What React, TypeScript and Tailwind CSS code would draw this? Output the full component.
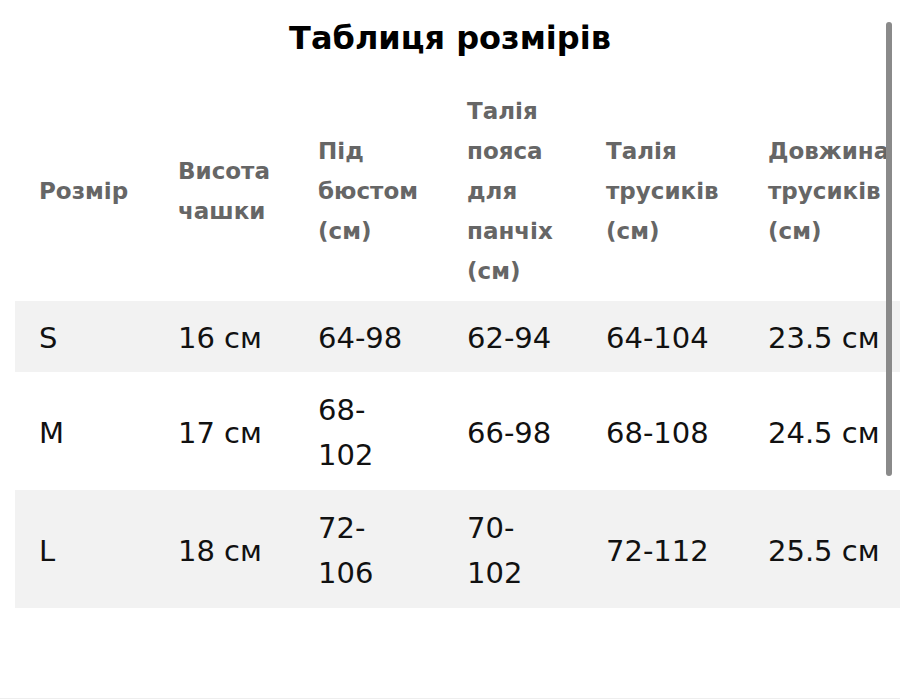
import React from "react";

type Row = { size: string; cup: string; bust: string[]; belt: string[]; waist: string; length: string };

const headers: string[][] = [
  ["Розмір"],
  ["Висота", "чашки"],
  ["Під", "бюстом", "(см)"],
  ["Талія", "пояса", "для", "панчіх", "(см)"],
  ["Талія", "трусиків", "(см)"],
  ["Довжина", "трусиків", "(см)"],
];

const rows: Row[] = [
  { size: "S", cup: "16 см", bust: ["64-98"], belt: ["62-94"], waist: "64-104", length: "23.5 см" },
  { size: "M", cup: "17 см", bust: ["68-", "102"], belt: ["66-98"], waist: "68-108", length: "24.5 см" },
  { size: "L", cup: "18 см", bust: ["72-", "106"], belt: ["70-", "102"], waist: "72-112", length: "25.5 см" },
];

const widths = ["w-[139px]", "w-[140px]", "w-[149px]", "w-[139px]", "w-[162px]", "w-[180px]"];

function Lines({ lines }: { lines: string[] }) {
  return (
    <>
      {lines.map((l, i) => (
        <span key={i} className="block whitespace-nowrap">
          {l}
        </span>
      ))}
    </>
  );
}

export default function App() {
  return (
    <div className="relative h-[699px] w-[900px] overflow-hidden bg-white font-['DejaVu_Sans',_sans-serif]">
      <h1 className="pt-[14px] text-center text-[32px] font-bold leading-[48px] text-black">
        Таблиця розмірів
      </h1>

      <div className="ml-[15px] mt-[29px]">
        <table className="w-[909px] table-fixed border-collapse">
          <colgroup>
            {widths.map((w, i) => (
              <col key={i} className={w} />
            ))}
          </colgroup>
          <thead>
            <tr>
              {headers.map((h, i) => (
                <th
                  key={i}
                  className="pb-[10px] pl-[24px] text-left align-middle text-[23px] font-bold leading-[40px] text-[#666666]"
                >
                  <Lines lines={h} />
                </th>
              ))}
            </tr>
          </thead>
          <tbody className="text-[29px] leading-[45px] text-[#111]">
            {rows.map((r, i) => {
              const cell = `${i === 0 ? "pt-[15px] pb-[11px]" : "pt-[16px] pb-[12px]"} pl-[24px] align-middle whitespace-nowrap`;
              return (
                <tr key={r.size} className={i % 2 === 0 ? "bg-[#f2f2f2]" : "bg-white"}>
                  <td className={cell}>{r.size}</td>
                  <td className={cell}>{r.cup}</td>
                  <td className={cell}>
                    <Lines lines={r.bust} />
                  </td>
                  <td className={cell}>
                    <Lines lines={r.belt} />
                  </td>
                  <td className={cell}>{r.waist}</td>
                  <td className={cell}>{r.length}</td>
                </tr>
              );
            })}
          </tbody>
        </table>
      </div>

      <div className="absolute left-[886px] top-[22px] h-[454px] w-[6px] rounded-full bg-[#8a8a8a]" />
      <div className="absolute bottom-0 left-0 h-px w-full bg-[#eeeeee]" />
    </div>
  );
}
